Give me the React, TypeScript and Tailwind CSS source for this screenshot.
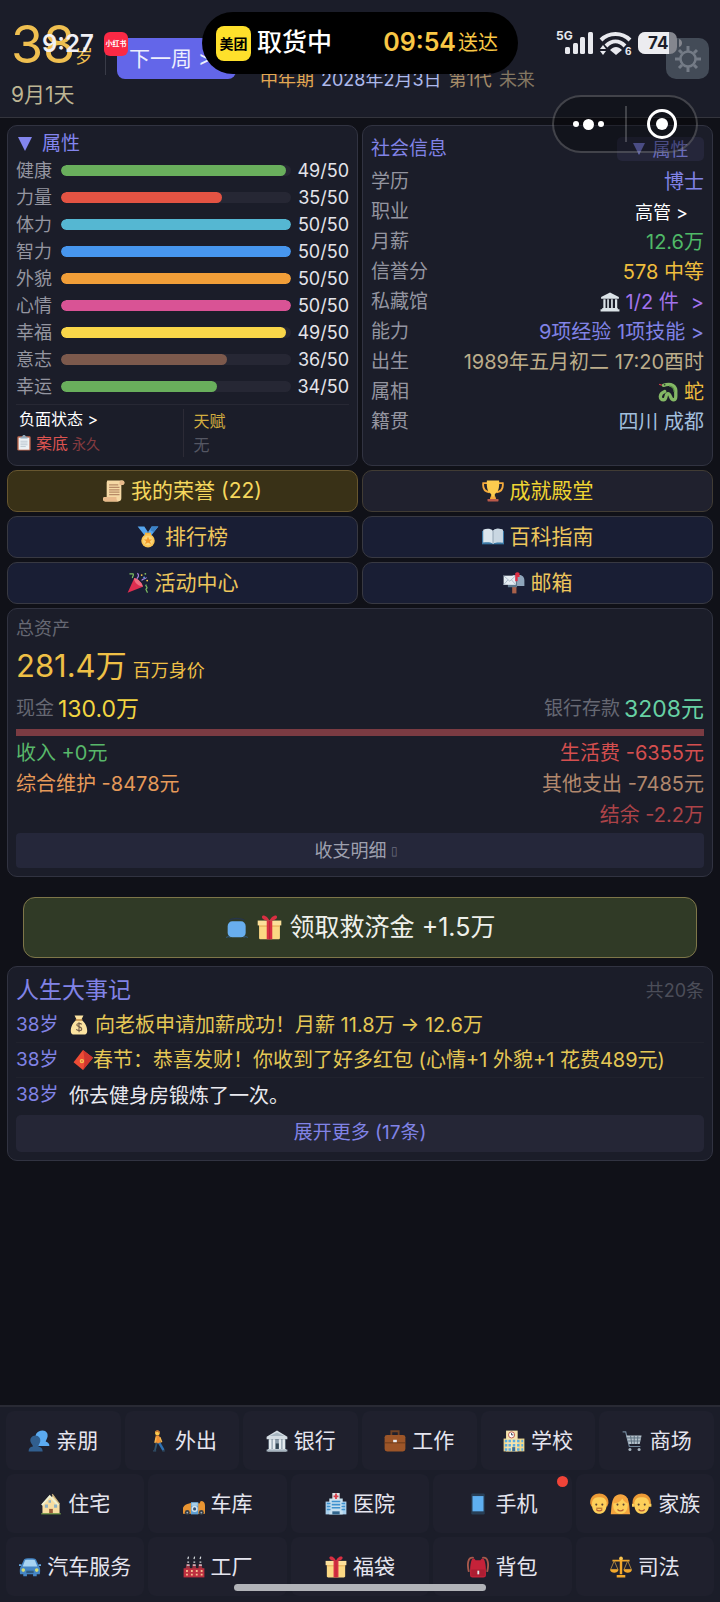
import type { ReactNode } from "react";

type IconProps = { className?: string };

function Svg({ children, className = "size-[22px]" }: { children: ReactNode; className?: string }) {
  return (
    <svg viewBox="0 0 36 36" className={`${className} shrink-0`} aria-hidden="true">
      {children}
    </svg>
  );
}

const Scroll = () => (
  <Svg>
    <path d="M7 1h25a3.500 3.500 0 0 1 3 4c0 2-1.500 3-3 3h-2v22a5 5 0 0 1-5 5H4a3.500 3.500 0 0 1-4-4c0-2 1.500-3 3-3h3V4z" fill="#f5d8a4" />
    <path d="M30 1a3.500 3.500 0 0 0-3 4v3h5a3 3 0 0 0 3-3 4 4 0 0 0-5-4zM3 28a3 3 0 0 0-3 3 4 4 0 0 0 4 4h21c-2-1-3-3-3-5v-2z" fill="#e8b98a" />
    <path d="M10 8h15M10 12h17M10 16h17M10 20h17M10 24h17" stroke="#b78a66" strokeWidth="2" />
  </Svg>
);

const Trophy = () => (
  <Svg>
    <path d="M9 5H2c-1 9 3 14 10 15M27 5h7c1 9-3 14-10 15" fill="none" stroke="#f4a93c" strokeWidth="3" />
    <path d="M8 1h20c1 13-2 20-7 22v6h-6v-6C10 21 7 14 8 1z" fill="#fccb4e" />
    <path d="M14 27h8l1 4H13z" fill="#f4a93c" />
    <rect x="9" y="31" width="18" height="4" rx="1" fill="#b9594a" />
  </Svg>
);

const Medal = () => (
  <Svg>
    <path d="M1 1h11l8 12-6 4zM35 1H24l-8 12 6 4z" fill="#55a5ee" />
    <path d="M24 1h11l-8 9-5-3z" fill="#3b82c8" />
    <path d="M13 11h10v5H13z" fill="#f5b23e" />
    <circle cx="18" cy="24" r="11" fill="#fbc553" />
    <circle cx="18" cy="24" r="8" fill="#fbd679" />
    <path d="m18 17 2 5h5l-4 3 2 5-5-3-5 3 2-5-4-3h5z" fill="#f39a2c" />
  </Svg>
);

const Book = () => (
  <Svg>
    <path d="M0 8h36v22H0z" fill="#3a78a5" />
    <path d="M2 6c6-2 12-2 16 2 4-4 10-4 16-2v21c-6-1-12-1-16 2-4-3-10-3-16-2z" fill="#dbe6ee" />
    <path d="M18 8v21c4-3 10-3 16-2V6c-6-2-12-2-16 2z" fill="#c9d7e2" />
    <path d="M18 8v20" stroke="#8ca0af" strokeWidth="1.500" />
  </Svg>
);

const Party = () => (
  <Svg>
    <path d="M12 10 1 34l25-10c-2-7-8-12-14-14z" fill="#dd2e50" />
    <path d="M12 10c-2 3 3 13 14 14-1-6-8-13-14-14z" fill="#ef6d80" />
    <path d="M4 3h6c2 3-2 4-1 7" fill="none" stroke="#7fbf63" strokeWidth="2" />
    <path d="M17 2c3 3 2 6-1 9M24 14c2-5 5-1 8-5" fill="none" stroke="#a682dc" strokeWidth="2" />
    <path d="M32 21c-4 1 3 4 0 6s2 4 1 7" fill="none" stroke="#7fbf63" strokeWidth="2" />
    <circle cx="24" cy="5" r="1.500" fill="#fccb4e" />
    <circle cx="30" cy="3" r="1.500" fill="#7fbf63" />
    <circle cx="28" cy="9" r="1.500" fill="#5c9ce0" />
    <circle cx="33" cy="14" r="1.500" fill="#fccb4e" />
  </Svg>
);

const Mailbox = () => (
  <Svg>
    <path d="M15 22h7v13h-7z" fill="#a9614a" />
    <path d="M16 5h11c5 0 8 4 8 9v9H16z" fill="#8fa6bb" />
    <path d="M8 8h10c3 2 5 5 5 9v8H8z" fill="#60788c" />
    <path d="M1 6h20v15H1z" fill="#e5edf3" />
    <path d="m1 6 10 9 10-9M1 21l7-8M21 21l-7-8" fill="none" stroke="#a7b8c6" strokeWidth="1.500" />
    <path d="M20 2c2-2 5-2 7 0v6h-3v7h-4z" fill="#dd2e44" />
  </Svg>
);

const Columns = ({ className }: IconProps) => (
  <Svg className={className}>
    <path d="M18 1 2 9v3h32V9zM4 29h28v2H4zM1 31h34v4H1z" fill="#dce3e8" />
    <path d="M6 13h4v16H6zM13 13h3v16h-3zM20 13h3v16h-3zM27 13h4v16h-4z" fill="#dce3e8" />
  </Svg>
);

const Snake = () => (
  <Svg className="size-5">
    <path d="M10 6C24 1 33 7 32 18c0 8 1 14-4 14-6 0-5-11-10-11s-2 11-8 11c-8 0-8-11 2-15" fill="none" stroke="#84b865" strokeWidth="6" strokeLinecap="round" strokeLinejoin="round" />
    <path d="M20 7c6 1 9 5 9 11" fill="none" stroke="#5c9348" strokeWidth="2" />
    <path d="m7 6-5-2" stroke="#dd3c4c" strokeWidth="2" />
    <circle cx="12" cy="5" r="1.500" fill="#263a25" />
  </Svg>
);

const Clipboard = () => (
  <Svg className="size-4">
    <rect x="3" y="3" width="30" height="32" rx="3" fill="#c1694f" />
    <path d="M6 6h24v27H6z" fill="#edf2f5" />
    <path d="M10 7V4h4c0-5 8-5 8 0h4v4H10z" fill="#93a8b8" />
    <path d="M10 14h16M10 18h16M10 22h16M10 26h12" stroke="#a7b6c2" strokeWidth="1.500" />
  </Svg>
);

const BlueSquare = () => (
  <Svg className="size-6">
    <path d="M7 6c4-3 16-3 22 0" stroke="#26354a" strokeWidth="2" fill="none" />
    <rect x="4" y="8" width="27" height="24" rx="7" fill="#68aeee" />
    <path d="M2 32c3-1 4-1 6 0M28 32c2-1 4-1 6 0" stroke="#3b6d9e" strokeWidth="1.500" />
  </Svg>
);

const Gift = ({ className }: IconProps) => (
  <Svg className={className}>
    <path d="M3 13h30v20c0 1-1 2-2 2H5c-1 0-2-1-2-2z" fill="#fbd883" />
    <path d="M1 8h34v7H1z" fill="#fce09a" />
    <path d="M3 15h30v2H3z" fill="#e9b663" />
    <path d="M14 8h8v27h-8z" fill="#d92f42" />
    <path d="M18 8C5 9 5-1 11 1c4 1 7 7 7 7s3-6 7-7c6-2 6 8-7 7z" fill="#d92f42" />
    <path d="M18 8v27" stroke="#a92638" strokeWidth="1" />
  </Svg>
);

const MoneyBag = () => (
  <Svg className="size-5">
    <path d="M10 1h16l-4 8c11 5 14 26 7 26H7C0 35 3 14 14 9z" fill="#fce3a0" />
    <path d="M12 9h12" stroke="#c89450" strokeWidth="3" />
    <path d="M23 17c-3-3-9-2-9 1s9 3 9 7-7 4-10 1M18 13v18" fill="none" stroke="#76604a" strokeWidth="2" />
  </Svg>
);

const RedPacket = () => (
  <Svg className="size-5">
    <path d="M18 0 36 14 18 36 1 22z" fill="#ee4c35" />
    <path d="M18 0 36 14 18 36c4-10 3-22 0-36z" fill="#cf352f" />
    <circle cx="16" cy="20" r="4" fill="#f8c454" />
    <circle cx="16" cy="20" r="1.500" fill="#dd5135" />
  </Svg>
);

const People = () => (
  <Svg>
    <path d="M24 1c6 0 9 5 8 10-1 4-3 6-3 8 4 2 6 3 6 7H15V17c-6-7-1-16 9-16z" fill="#5baaf0" />
    <path d="M12 9c6 0 9 5 8 10-1 4-3 5-3 8 5 1 7 4 7 8H1c0-5 2-7 7-8 0-3-3-4-4-8-1-5 2-10 8-10z" fill="#315f8f" />
  </Svg>
);

const Walker = () => (
  <Svg>
    <circle cx="17" cy="5" r="4" fill="#fccb4e" />
    <path d="M13 4c1-5 7-5 8 0l-1 2-2-3z" fill="#c77431" />
    <path d="M14 9h6l3 13h-9z" fill="#f19135" />
    <path d="m15 12-2 9M21 12l3 8" stroke="#f6b64e" strokeWidth="2.500" />
    <path d="m16 21-3 12" stroke="#31536e" strokeWidth="3" />
    <path d="m20 21 7 12" stroke="#2f73b5" strokeWidth="4" />
    <path d="M10 34h5M25 34h4" stroke="#31536e" strokeWidth="2" />
  </Svg>
);

const Bank = () => (
  <Svg>
    <path d="M18 1 1 11v4h34v-4zM3 31h30v4H3z" fill="#d4dce3" />
    <path d="M4 15h28v16H4z" fill="#899aa8" />
    <path d="M5 15h4v16H5zM11 15h4v16h-4zM21 15h4v16h-4zM27 15h4v16h-4z" fill="#e5ebef" />
    <path d="M16 22h5v9h-5z" fill="#334653" />
    <path d="M6 10 18 4l12 6zM1 32h34v3H1z" fill="#a7b5c0" />
  </Svg>
);

const Briefcase = () => (
  <Svg>
    <path d="M12 9V2h12v7" fill="none" stroke="#704225" strokeWidth="3" />
    <rect x="1" y="8" width="34" height="27" rx="4" fill="#9c5528" />
    <path d="M1 21h34" stroke="#673819" strokeWidth="1.500" />
    <rect x="15" y="16" width="6" height="4" fill="#e9eef1" />
  </Svg>
);

const School = () => (
  <Svg>
    <path d="M1 14h34v21H1z" fill="#f2d98d" />
    <path d="M5 1h19v34H5z" fill="#f5e3ac" />
    <circle cx="14" cy="8" r="5" fill="#fff" stroke="#b85449" strokeWidth="1.500" />
    <path d="M14 5v3h3" fill="none" stroke="#30404d" strokeWidth="1.500" />
    <path d="M3 16h4v4H3zM9 16h4v4H9zM16 16h4v4h-4zM23 16h4v4h-4zM30 16h3v4h-3zM3 23h4v4H3zM9 23h4v4H9zM16 23h4v4h-4zM23 23h4v4h-4zM30 23h3v4h-3zM3 30h4v4H3zM9 30h4v4H9zM23 30h4v4h-4zM30 30h3v4h-3z" fill="#5baee2" />
    <path d="M15 28h5v7h-5z" fill="#3b6e99" />
  </Svg>
);

const Cart = () => (
  <Svg>
    <path d="M1 3h5l6 24h18" fill="none" stroke="#71869a" strokeWidth="2" />
    <path d="M7 9h25l-3 14H11z" fill="#b5c1cb" />
    <path d="M8 13h23M10 18h20M14 9l2 14M20 9v14M26 9l-1 14" stroke="#596b7b" strokeWidth="1.500" />
    <circle cx="13" cy="32" r="2.500" fill="#a5b2bd" />
    <circle cx="28" cy="32" r="2.500" fill="#a5b2bd" />
  </Svg>
);

const House = () => (
  <Svg>
    <path d="M4 17 15 5l4 4 2-6 11 15v16H4z" fill="#f8dda0" />
    <path d="m3 20 13-15 14 15" fill="none" stroke="#eef1d4" strokeWidth="3" />
    <path d="m20 2 12 16" stroke="#c8b17e" strokeWidth="2" />
    <path d="M8 19h5v5H8zM23 19h5v5h-5zM14 12h4v4h-4z" fill="#8db0c4" />
    <path d="M15 26h6v8h-6z" fill="#975a38" />
    <path d="M2 33h32v2H2z" fill="#729c49" />
  </Svg>
);

const Garage = () => (
  <Svg>
    <path d="M0 34V24c2-5 6-6 10-7l4-1h8l5 1 2-4c5 0 7 3 7 8v13z" fill="#e99532" />
    <path d="M13 15h12v20H13z" fill="#5d9fd4" />
    <path d="M14 16h10v5H14z" fill="#a6cde6" />
    <circle cx="19" cy="26" r="5" fill="#d3e3ed" />
    <circle cx="19" cy="26" r="2.500" fill="#315276" />
    <circle cx="7" cy="32" r="4" fill="#333c46" />
    <circle cx="30" cy="32" r="4" fill="#333c46" />
    <circle cx="7" cy="32" r="1.500" fill="#a6b2bc" />
    <circle cx="30" cy="32" r="1.500" fill="#a6b2bc" />
  </Svg>
);

const Hospital = () => (
  <Svg>
    <path d="M1 14h34v21H1z" fill="#a9d0ed" />
    <path d="M7 9h22v26H7z" fill="#c6dfef" />
    <rect x="12" y="0" width="12" height="11" fill="#dce3e8" />
    <path d="M18 1v9M14 5.500h8" stroke="#d73f4b" strokeWidth="3" />
    <path d="M3 17h6M3 22h6M3 27h6M27 17h6M27 22h6M27 27h6M11 14h14M11 19h14M11 24h14" stroke="#3e91ce" strokeWidth="2.500" />
    <path d="M12 30h12v5H12z" fill="#31658c" />
  </Svg>
);

const Phone = () => (
  <Svg>
    <rect x="7" y="1" width="22" height="34" rx="2" fill="#283e55" />
    <path d="M9 5h18v25H9z" fill="#5eaff0" />
  </Svg>
);

function Face({ x, hair }: { x: number; hair: "short" | "long" | "boy" }) {
  return (
    <g transform={`translate(${x} 0)`}>
      {hair === "long" ? (
        <path d="M1 35C3 26 0 2 17 2s14 24 16 33z" fill="#f5a53f" />
      ) : (
        <path d="M2 17C0-5 34-5 32 17l-2 5H4z" fill="#ec9a35" />
      )}
      <path d="M5 15c2-6 5-8 12-8s10 2 12 8v5c0 19-24 19-24 0z" fill="#fdd05a" />
      {hair === "boy" && <path d="M1 20h4M29 20h4" stroke="#fdd05a" strokeWidth="5" />}
      {hair === "long" && <path d="M5 17c8 0 12-3 15-8 2 4 5 7 9 8V9L17 4 6 9z" fill="#f5a53f" />}
      <circle cx="12" cy="19" r="1.700" fill="#5c4534" />
      <circle cx="22" cy="19" r="1.700" fill="#5c4534" />
      <path d="M12 27c3 3 7 3 10 0" fill="none" stroke="#b75d36" strokeWidth="2" />
      {hair === "short" && <path d="M12 25h10" stroke="#b8722f" strokeWidth="2" />}
    </g>
  );
}

const Family = () => (
  <svg viewBox="0 0 104 36" className="h-[22px] w-[63px] shrink-0" aria-hidden="true">
    <Face x={0} hair="short" />
    <Face x={35} hair="long" />
    <Face x={70} hair="boy" />
  </svg>
);

const Car = () => (
  <Svg>
    <path d="M8 6c1-3 19-3 20 0l5 11c2 2 2 9 1 13h-5v3h-6v-3H13v3H7v-3H2c-1-4-1-11 1-13z" fill="#4586c5" />
    <path d="M10 7c2-1 14-1 16 0l4 10H6z" fill="#a8d4f2" />
    <path d="M12 24h12v4H12z" fill="#2e5c83" />
    <circle cx="7" cy="23" r="3" fill="#d4dd72" />
    <circle cx="29" cy="23" r="3" fill="#d4dd72" />
    <path d="M0 15h4M32 15h4" stroke="#65a7df" strokeWidth="3" />
  </Svg>
);

const Factory = () => (
  <Svg>
    <path d="m4 21 2-8h4l2 8M15 21l1-8h4l2 8M25 21l1-8h4l2 8" fill="#963341" />
    <path d="M1 20h34v15H1z" fill="#be3040" />
    <path d="m8 5 1-4M18 5l1-4M28 5l1-4M7 10h3M17 10h3M27 10h3M6 15h5M16 15h5M26 15h5" stroke="#d4d9dc" strokeWidth="2" />
    <path d="M5 23h3v3H5zM13 23h3v3h-3zM21 23h3v3h-3zM29 23h3v3h-3zM5 29h3v3H5zM13 29h3v3h-3zM21 29h3v3h-3zM29 29h3v3h-3z" fill="#f4bc8e" />
  </Svg>
);

const Backpack = () => (
  <Svg>
    <path d="M11 3C1 0 0 14 3 26M25 3c10-3 11 11 8 23" fill="none" stroke="#a8594c" strokeWidth="3" />
    <path d="M7 8c2-5 5-5 7-1h8c2-4 5-4 7 1 2 7 2 13 2 23 0 3-2 4-4 4H9c-2 0-4-1-4-4C5 21 5 15 7 8z" fill="#c52239" />
    <path d="M7 22h22v11H7z" fill="#ad1e33" />
    <path d="M17 24h3v6h-3z" fill="#e4e8ea" />
  </Svg>
);

const Scales = () => (
  <Svg>
    <path d="M16 3h4v27h-4zM11 31h14v4H11zM4 6h28v3H4z" fill="#f2a82c" />
    <path d="m7 8-6 14h12L7 8zM29 8l-6 14h12z" fill="none" stroke="#b58a40" strokeWidth="1.500" />
    <path d="M0 22h14c-1 7-13 7-14 0zM22 22h14c-1 7-13 7-14 0z" fill="#f2a82c" />
    <circle cx="18" cy="4" r="3" fill="#fac44e" />
  </Svg>
);

const attributes = [
  { name: "健康", value: 49, color: "bg-[#69af5c]" },
  { name: "力量", value: 35, color: "bg-[#e35343]" },
  { name: "体力", value: 50, color: "bg-[#55b7d2]" },
  { name: "智力", value: 50, color: "bg-[#4796ee]" },
  { name: "外貌", value: 50, color: "bg-[#f19e38]" },
  { name: "心情", value: 50, color: "bg-[#d95395]" },
  { name: "幸福", value: 49, color: "bg-[#fad749]" },
  { name: "意志", value: 36, color: "bg-[#7c594c]" },
  { name: "幸运", value: 34, color: "bg-[#69af5c]" },
];

const card = "rounded-[10px] border border-[#313341] bg-[#1b1d29]";

function AttributesCard() {
  return (
    <section className={`${card} flex flex-col px-2 pt-[5px]`}>
      <h2>
        <button type="button" className="flex h-[26px] items-center gap-2.5 pl-0.5 text-[19px] text-[#8385ee]">
          <svg viewBox="0 0 16 14" className="h-3.5 w-3.5" preserveAspectRatio="none" aria-hidden="true">
            <path d="M0 0h16L8 14z" fill="currentColor" />
          </svg>
          属性
        </button>
      </h2>
      <ul>
        {attributes.map((a) => (
          <li key={a.name} className="flex h-[27px] items-center">
            <span className="w-[45px] text-[18px] text-[#9495a0]">{a.name}</span>
            <span className="h-[11px] flex-1 overflow-hidden rounded-full bg-[#262734]">
              <span className={`block h-full rounded-full ${a.color}`} style={{ width: `${a.value * 2}%` }} />
            </span>
            <span className="w-[58px] text-right text-[18px] text-[#e4e4ea]">{a.value}/50</span>
          </li>
        ))}
      </ul>
      <div className="mt-1 grid flex-1 grid-cols-2 border-t border-[#272834]">
        <div className="flex flex-col pt-0.5">
          <button type="button" className="flex h-6 items-center pl-[3px] text-[16px] text-white">
            负面状态 &gt;
          </button>
          <p className="flex h-6 items-center gap-1 text-[16px] text-[#dc5350]">
            <Clipboard />
            案底 <span className="text-[14px] text-[#853b40]">永久</span>
          </p>
        </div>
        <div className="mt-1 mb-2 border-l border-[#2c2b36] pl-2.5 text-[16px]">
          <h3 className="leading-6 text-[#d2ad40]">天赋</h3>
          <p className="leading-6 text-[#555763]">无</p>
        </div>
      </div>
    </section>
  );
}

function Row({ label, children, color }: { label: string; children: ReactNode; color: string }) {
  return (
    <div className="flex h-[30px] items-center justify-between">
      <dt className="text-[19px] text-[#9495a0]">{label}</dt>
      <dd className={`flex items-center gap-1.5 text-[20px] ${color}`}>{children}</dd>
    </div>
  );
}

function SocialCard() {
  return (
    <section className={`${card} px-2 pt-[9px]`}>
      <div className="flex h-7 items-center justify-between">
        <h2 className="text-[19px] text-[#8183e6]">社会信息</h2>
        <button type="button" className="flex h-6 w-[87px] items-center justify-center gap-2 rounded-[5px] bg-[#25263a] text-[18px] text-[#6a6dbd]">
          <svg viewBox="0 0 12 12" className="size-3" aria-hidden="true">
            <path d="M0 0h12L6 12z" fill="currentColor" />
          </svg>
          属性
        </button>
      </div>
      <dl className="mt-1">
        <Row label="学历" color="text-[#8183e6]">博士</Row>
        <Row label="职业" color="text-white">
          <button type="button" className="mr-4 text-[18px]">高管 &gt;</button>
        </Row>
        <Row label="月薪" color="text-[#4fb967]">12.6万</Row>
        <Row label="信誉分" color="text-[#efbd3d]">578 中等</Row>
        <Row label="私藏馆" color="text-[#a273ed]">
          <Columns className="size-5" />
          <button type="button" className="flex gap-3"><span>1/2 件</span><span>&gt;</span></button>
        </Row>
        <Row label="能力" color="text-[#8183e6]">
          <button type="button">9项经验 1项技能 &gt;</button>
        </Row>
        <Row label="出生" color="text-[#bcad8b]">1989年五月初二 17:20酉时</Row>
        <Row label="属相" color="text-[#efbd3d]">
          <Snake />
          蛇
        </Row>
        <Row label="籍贯" color="text-[#a1bedb]">四川 成都</Row>
      </dl>
    </section>
  );
}

const shortcuts = [
  { icon: <Scroll />, label: "我的荣誉 (22)", style: "bg-[#393117] border-[#67562f] text-[#f5d75d]" },
  { icon: <Trophy />, label: "成就殿堂", style: "bg-[#20212e] border-[#413c34] text-[#efd432]" },
  { icon: <Medal />, label: "排行榜", style: "bg-[#191e34] border-[#383942] text-[#edc65c]" },
  { icon: <Book />, label: "百科指南", style: "bg-[#191e34] border-[#383942] text-[#edc65c]" },
  { icon: <Party />, label: "活动中心", style: "bg-[#191e34] border-[#383942] text-[#edc65c]" },
  { icon: <Mailbox />, label: "邮箱", style: "bg-[#191e34] border-[#383942] text-[#edc65c]" },
];

function AssetsCard() {
  return (
    <section className={`${card} px-2 pt-1 pb-2 text-[20px]`}>
      <h2 className="h-8 text-[18px] leading-8 text-[#666873]">总资产</h2>
      <p className="flex h-[42px] items-baseline gap-1.5 text-[#efc046]">
        <span className="text-[31px] leading-[42px]">281.4万</span>
        <span className="text-[18px]">百万身价</span>
      </p>
      <div className="mt-1.5 flex h-8 items-center justify-between text-[19px] text-[#666873]">
        <p className="flex items-center gap-1">
          现金 <span className="text-[23px] text-[#f2d541]">130.0万</span>
        </p>
        <p className="flex items-center gap-1">
          银行存款 <span className="text-[23px] text-[#67d1a4]">3208元</span>
        </p>
      </div>
      <div className="mt-1 h-[7px] bg-[#7b3b42]" />
      <div className="mt-0.5 grid grid-cols-2 leading-[31px]">
        <p className="text-[#58b76a]">收入 +0元</p>
        <p className="text-right text-[#d54f4f]">生活费 -6355元</p>
        <p className="text-[#e69a59]">综合维护 -8478元</p>
        <p className="text-right text-[#b1886d]">其他支出 -7485元</p>
        <p className="col-start-2 text-right text-[#ad4348]">结余 -2.2万</p>
      </div>
      <button type="button" className="mt-0.5 flex h-[35px] w-full items-center justify-center gap-1 rounded-[4px] bg-[#25273a] pr-2 text-[18px] text-[#9ea0af]">
        收支明细 <span className="text-[12px] text-[#6d6f80]">▯</span>
      </button>
    </section>
  );
}

function EventsCard() {
  return (
    <section className={`${card} px-2 pt-[5px] pb-2 text-[20px]`}>
      <div className="flex h-9 items-center justify-between">
        <h2 className="text-[23px] text-[#8183e6]">人生大事记</h2>
        <span className="text-[18px] text-[#4c4e59]">共20条</span>
      </div>
      <ol>
        <li className="flex h-[35px] items-center border-b border-[#20222d] text-[#e5c855]">
          <span className="w-[53px] text-[19px] text-[#8183e6]">38岁</span>
          <MoneyBag />
          <span className="ml-1.5">向老板申请加薪成功！月薪 11.8万 → 12.6万</span>
        </li>
        <li className="flex h-[35px] items-center border-b border-[#20222d] text-[#e5c855]">
          <span className="w-[57px] text-[19px] text-[#8183e6]">38岁</span>
          <RedPacket />
          <span>春节：恭喜发财！你收到了好多红包 (心情+1 外貌+1 花费489元)</span>
        </li>
        <li className="flex h-[35px] items-center text-[#e9e9ef]">
          <span className="w-[53px] text-[19px] text-[#8183e6]">38岁</span>
          <span>你去健身房锻炼了一次。</span>
        </li>
      </ol>
      <button type="button" className="mt-0.5 h-[37px] w-full rounded-[5px] bg-[#252636] text-[19px] text-[#8183e6]">
        展开更多 (17条)
      </button>
    </section>
  );
}

const navTop = [
  { icon: <People />, label: "亲朋" },
  { icon: <Walker />, label: "外出" },
  { icon: <Bank />, label: "银行" },
  { icon: <Briefcase />, label: "工作" },
  { icon: <School />, label: "学校" },
  { icon: <Cart />, label: "商场" },
];

const navRest = [
  { icon: <House />, label: "住宅" },
  { icon: <Garage />, label: "车库" },
  { icon: <Hospital />, label: "医院" },
  { icon: <Phone />, label: "手机", alert: true },
  { icon: <Family />, label: "家族" },
  { icon: <Car />, label: "汽车服务" },
  { icon: <Factory />, label: "工厂" },
  { icon: <Gift />, label: "福袋" },
  { icon: <Backpack />, label: "背包" },
  { icon: <Scales />, label: "司法" },
];

function NavButton({ icon, label, alert }: { icon: ReactNode; label: string; alert?: boolean }) {
  return (
    <button type="button" className="relative flex h-[59px] items-center justify-center gap-1.5 rounded-lg bg-[#1f202d] text-[21px] whitespace-nowrap text-[#e5e5ef]">
      {icon}
      {label}
      {alert && <span className="absolute top-0.5 right-1 size-[11px] rounded-full bg-[#f04438]" />}
    </button>
  );
}

function Header() {
  return (
    <header className="flex h-[118px] items-start border-b border-[#34353d] bg-[#1b1d29] pt-[19px] pr-[11px] pl-[11px]">
      <div className="w-[94px] shrink-0">
        <p className="flex items-baseline text-[#efbf50]">
          <span className="w-16 text-[52px] leading-[52px]">38</span>
          <span className="text-[18px]">岁</span>
        </p>
        <p className="mt-2.5 text-[21px] leading-7 text-[#bdb594]">9月1天</p>
      </div>
      <div className="mt-[19px] h-[37px] w-px bg-[#393b47]" />
      <button type="button" className="mt-[19px] ml-[11px] h-[41px] w-[119px] rounded-lg bg-[#6366e9] pl-3 text-left text-[21px] text-[#edeefd]">
        下一周 &gt;
      </button>
      <p className="mt-[47px] ml-6 flex flex-1 gap-[7px] text-[18px] leading-7 whitespace-nowrap">
        <span className="text-[#e3a852]">中年期</span>
        <span className="text-[#adb9eb]">2028年2月3日</span>
        <span className="text-[#a78d68]">第1代</span>
        <span className="text-[#847762]">未来</span>
      </p>
      <button type="button" aria-label="设置" className="mt-[19px] flex h-[41px] w-[43px] items-center justify-center rounded-[10px] bg-[#434b57] text-[#747b86]">
        <svg viewBox="0 0 26 26" className="size-[26px]" fill="none" stroke="currentColor" strokeWidth="3" aria-hidden="true">
          <circle cx="13" cy="13" r="7.500" strokeWidth="2.500" />
          <path d="M13 0v5M13 21v5M0 13h5M21 13h5M4 4l3 3M19 19l3 3M22 4l-3 3M7 19l-3 3" />
        </svg>
      </button>
    </header>
  );
}

function StatusBar() {
  return (
    <div className="pointer-events-none absolute inset-x-0 top-0 h-[86px]">
      <span className="absolute top-7 left-[42px] text-[24px] leading-8 font-semibold text-[#f0f0f6]">9:27</span>
      <span className="absolute top-8 left-[104px] flex size-6 items-center justify-center rounded-md bg-[#fb2945] text-[7px] font-bold whitespace-nowrap text-white">
        小红书
      </span>
      <div className="absolute top-3 left-1/2 flex h-[62px] w-[316px] -translate-x-1/2 items-center rounded-full bg-black pr-5 pl-[14px]">
        <span className="flex size-[35px] items-center justify-center rounded-lg bg-[#fee02b] text-[14px] font-bold text-black">美团</span>
        <span className="ml-1.5 text-[25px] font-medium text-white">取货中</span>
        <span className="ml-auto flex items-center gap-0.5 text-[#f8c745]">
          <span className="text-[25px] font-semibold">09:54</span>
          <span className="text-[20px]">送达</span>
        </span>
      </div>
      <svg viewBox="0 0 130 30" className="absolute top-7 right-[34px] h-[30px] w-[130px]" aria-hidden="true">
        <text x="0" y="12" fontSize="12" fontWeight="700" fill="#e8e9ee" fontFamily="Inter, sans-serif">5G</text>
        <g fill="#e8e9ee">
          <rect x="9" y="19" width="5" height="7" rx="1.500" />
          <rect x="17" y="15" width="5" height="11" rx="1.500" />
          <rect x="24" y="9" width="5" height="17" rx="1.500" />
          <rect x="32" y="4" width="5" height="22" rx="1.500" />
        </g>
        <g fill="none" stroke="#e8e9ee" strokeWidth="4">
          <path d="M45 12c8-8 21-8 29 0M50 18c6-6 13-6 19 0" />
        </g>
        <path d="M54 22c4-4 8-4 12 0l-6 5z" fill="#e8e9ee" />
        <path d="m44 21 3-4 3 4zM44 23l3 4 3-4z" fill="#e8e9ee" />
        <text x="69" y="27" fontSize="10" fontWeight="700" fill="#e8e9ee" fontFamily="Inter, sans-serif">6</text>
        <rect x="82" y="4" width="39" height="22" rx="7" fill="#84868e" />
        <path d="M89 4h24v22H89a7 7 0 0 1-7-7v-8a7 7 0 0 1 7-7z" fill="#ececf0" />
        <path d="M123 11c4 1 4 7 0 8z" fill="#84868e" />
        <text x="92" y="21" fontSize="17" fontWeight="700" fill="#1b1d29" fontFamily="Inter, sans-serif">74</text>
      </svg>
    </div>
  );
}

function Capsule() {
  return (
    <div className="absolute top-[95px] right-[22px] flex h-[58px] w-[146px] items-center rounded-full border-2 border-white/20 bg-black/30">
      <button type="button" aria-label="更多" className="flex flex-1 items-center justify-center gap-1 pr-0.5">
        <span className="size-1.5 rounded-full bg-white" />
        <span className="size-[11px] rounded-full bg-white" />
        <span className="size-1.5 rounded-full bg-white" />
      </button>
      <span className="h-9 w-0.5 bg-white/20" />
      <button type="button" aria-label="关闭" className="flex flex-1 justify-center">
        <span className="flex size-[30px] items-center justify-center rounded-full border-[3px] border-white">
          <span className="size-3 rounded-full bg-white" />
        </span>
      </button>
    </div>
  );
}

export default function App() {
  return (
    <div className="relative flex min-h-screen flex-col bg-[#101118] font-['Inter','Noto_Sans_CJK_SC',sans-serif]">
      <Header />
      <main className="flex flex-col gap-1 px-[7px] pt-[7px] pb-5">
        <div className="grid min-h-[340px] grid-cols-2 gap-1">
          <AttributesCard />
          <SocialCard />
        </div>
        <div className="grid grid-cols-2 gap-1">
          {shortcuts.map((s) => (
            <button key={s.label} type="button" className={`flex h-[42px] items-center justify-center gap-1.5 rounded-[10px] border text-[21px] ${s.style}`}>
              {s.icon}
              {s.label}
            </button>
          ))}
        </div>
        <AssetsCard />
        <button type="button" className="mx-4 mt-4 mb-1 flex h-[61px] items-center justify-center gap-2 rounded-xl border border-[#7e7649] bg-[#303a26] text-[25px] text-[#eef0eb]">
          <BlueSquare />
          <Gift className="size-[25px]" />
          领取救济金 +1.5万
        </button>
        <EventsCard />
      </main>
      <nav className="mt-auto flex flex-col gap-1 border-t-2 border-[#292a34] bg-[#1b1d29] px-1.5 pt-1 pb-1.5">
        <div className="grid grid-cols-6 gap-1">
          {navTop.map((n) => (
            <NavButton key={n.label} {...n} />
          ))}
        </div>
        <div className="grid grid-cols-5 gap-1">
          {navRest.map((n) => (
            <NavButton key={n.label} {...n} />
          ))}
        </div>
      </nav>
      <StatusBar />
      <Capsule />
      <div className="absolute bottom-[11px] left-1/2 h-[7px] w-[252px] -translate-x-1/2 rounded-full bg-[#b1b3b8]" />
    </div>
  );
}
